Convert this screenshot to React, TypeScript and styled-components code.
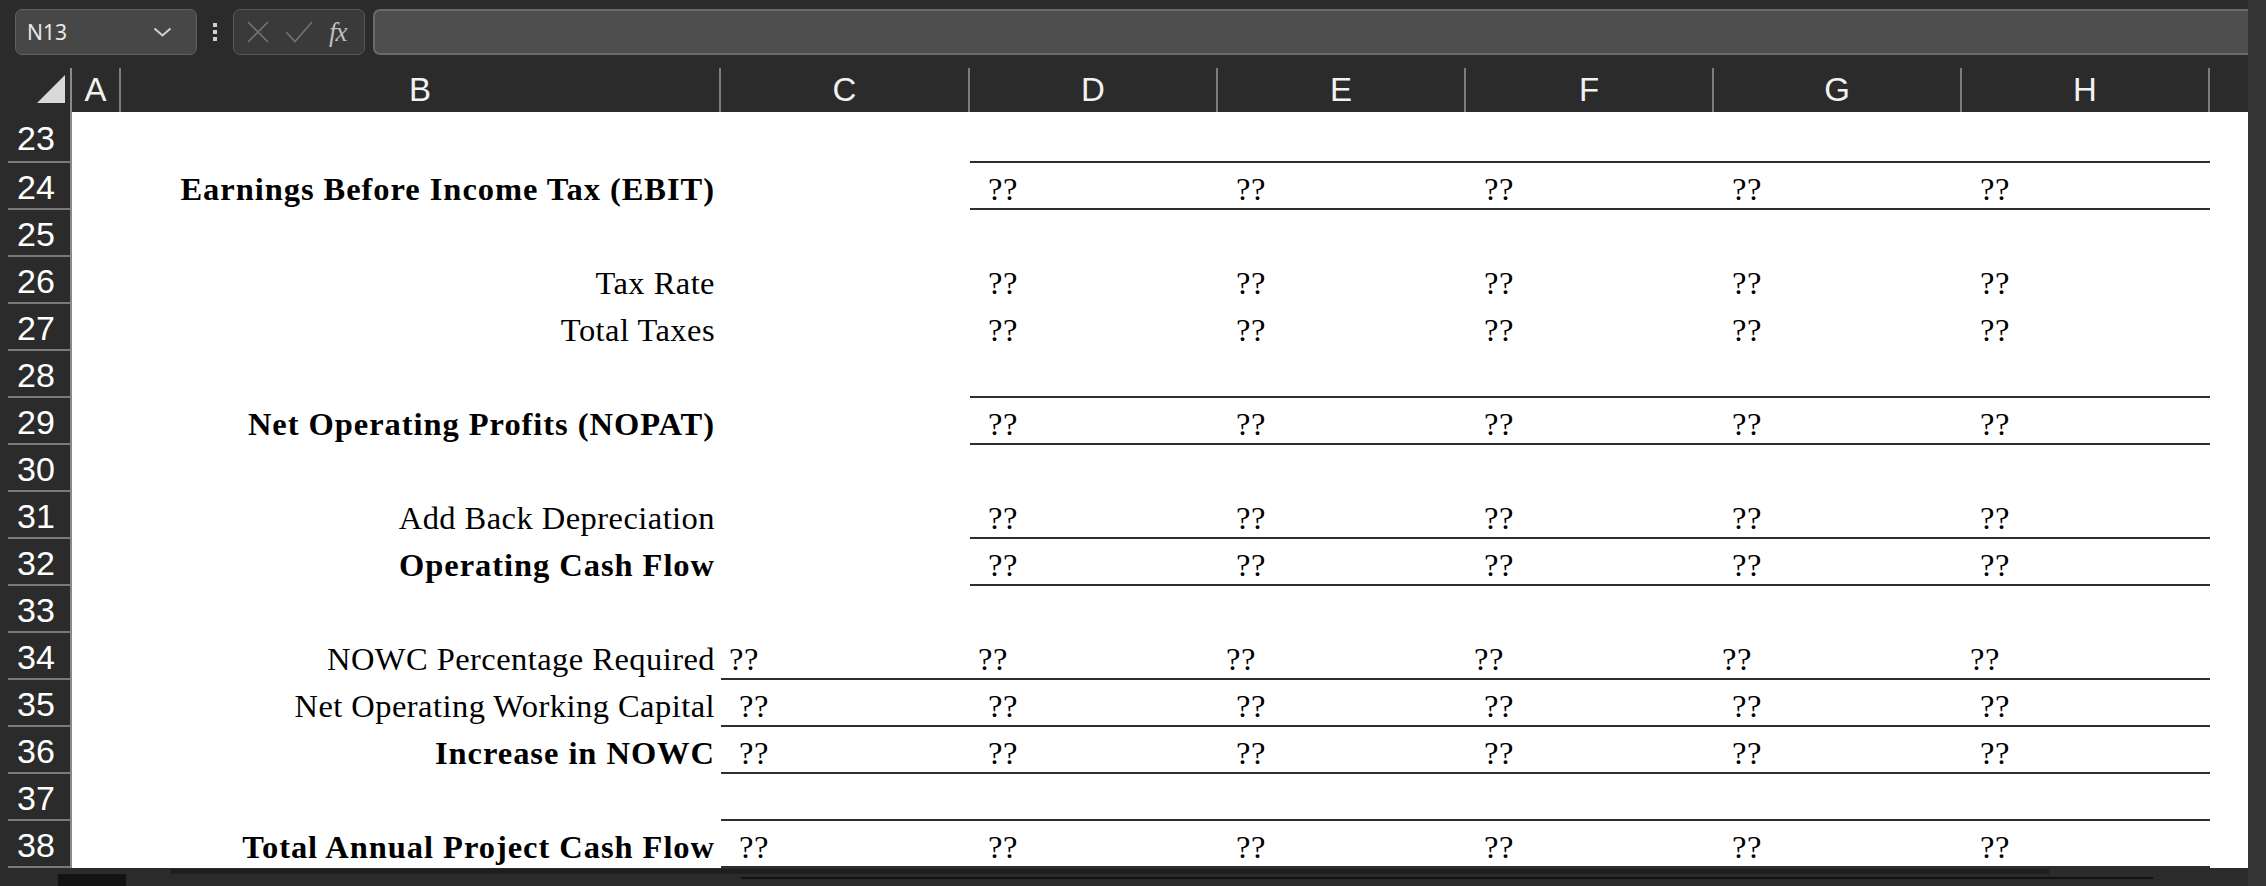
import React from "react";
import styled, { createGlobalStyle } from "styled-components";

const COLS = "72px 49px 600px 249px repeat(5, 248px) 38px";
const LETTERS = ["A", "B", "C", "D", "E", "F", "G", "H", ""];

const GlobalStyle = createGlobalStyle`
  html, body {
    margin: 0;
    padding: 0;
    background: #2b2b2b;
    overflow: hidden;
  }
  * {
    box-sizing: border-box;
  }
`;

const Frame = styled.div`
  display: flex;
  width: 2266px;
  height: 886px;
  background: #2b2b2b;
  overflow: hidden;
`;

const Main = styled.div`
  width: 2248px;
  display: flex;
  flex-direction: column;
`;

const RightRail = styled.div`
  width: 18px;
  background: #353535;
`;

const Toolbar = styled.div`
  height: 62px;
  display: flex;
  align-items: flex-start;
  padding: 9px 0 0 15px;
`;

const NameBox = styled.div`
  width: 182px;
  height: 46px;
  border: 1.5px solid #606060;
  border-radius: 7px;
  background: #474747;
  display: flex;
  align-items: center;
  justify-content: space-between;
  padding: 0 24px 0 11px;
  font-family: "Noto Sans", "Liberation Sans", sans-serif;
  font-size: 21px;
  color: #e8e8e8;
`;

const Kebab = styled.div`
  width: 36px;
  height: 46px;
  display: flex;
  flex-direction: column;
  align-items: center;
  justify-content: center;
  gap: 3.5px;
`;

const Dot = styled.span`
  width: 3.5px;
  height: 3.5px;
  background: #cfcfcf;
`;

const FuncBox = styled.div`
  width: 132px;
  height: 46px;
  border: 1.5px solid #585858;
  border-radius: 7px;
  background: #3a3a3a;
  display: flex;
  align-items: center;
  padding-left: 13px;
  gap: 16px;
`;

const Fx = styled.span`
  font-family: "Liberation Serif", serif;
  font-style: italic;
  font-size: 27px;
  color: #bdbdbd;
  letter-spacing: -1px;
`;

const FormulaBar = styled.div`
  flex: 1;
  height: 46px;
  margin-left: 8px;
  background: #4e4e4e;
  border: 2px solid #6a6a6a;
  border-right: none;
  border-radius: 7px 0 0 7px;
`;

const HeaderRow = styled.div`
  display: grid;
  grid-template-columns: ${COLS};
  height: 50px;
  align-items: end;
`;

const Corner = styled.div`
  height: 44px;
  display: flex;
  justify-content: flex-end;
  align-items: flex-end;
  padding: 0 5px 9px 0;
  border-right: 2px solid #8a8a8a;
`;

const ColHead = styled.div<{ $last?: boolean }>`
  height: 44px;
  border-right: ${(p) => (p.$last ? "none" : "2px solid #7d7d7d")};
  display: flex;
  align-items: center;
  justify-content: center;
  font-family: "Liberation Sans", Arial, sans-serif;
  font-size: 33px;
  color: #f2f2f2;
`;

const GridRow = styled.div<{ $h: number }>`
  display: grid;
  grid-template-columns: ${COLS};
  height: ${(p) => p.$h}px;
`;

const RowNum = styled.div`
  background: #2b2b2b;
  border-right: 2px solid #8a8a8a;
  padding-left: 8px;
  display: flex;
`;

const RowNumInner = styled.div`
  flex: 1;
  border-bottom: 2px solid #7a7a7a;
  display: flex;
  align-items: center;
  justify-content: center;
  padding: 4px 6px 0 0;
  font-family: "Liberation Sans", Arial, sans-serif;
  font-size: 34px;
  color: #ffffff;
`;

const Cell = styled.div<{ $line?: boolean }>`
  background: #ffffff;
  border-bottom: 2px solid ${(p) => (p.$line ? "#2e2e2e" : "transparent")};
  display: flex;
  align-items: flex-end;
  padding-bottom: 2px;
  font-family: "Liberation Serif", "Times New Roman", serif;
  font-size: 32.5px;
  line-height: 33px;
  color: #000;
  white-space: nowrap;
`;

const LabelCell = styled(Cell)<{ $bold?: boolean }>`
  justify-content: flex-end;
  padding-right: 6px;
  font-weight: ${(p) => (p.$bold ? 700 : 400)};
  letter-spacing: ${(p) => (p.$bold ? "0.95px" : "0.45px")};
`;

const ValueCell = styled(Cell)<{ $pad: number }>`
  padding-left: ${(p) => p.$pad}px;
  letter-spacing: 0.6px;
`;

const BottomBar = styled.div`
  height: 18px;
  display: flex;
  align-items: flex-start;
`;

const SheetTab = styled.div`
  width: 68px;
  height: 12px;
  margin: 6px 45px 0 58px;
  background: #131313;
`;

const ScrollArea = styled.div`
  flex: 1;
  display: flex;
  flex-direction: column;
  padding-top: 1px;
`;

const ScrollBand = styled.div`
  width: 1878px;
  height: 5px;
  background: #1e1e1e;
`;

const ScrollThumb = styled.div`
  width: 1412px;
  height: 2px;
  margin: 3px 0 0 570px;
  background: #111111;
`;

type Row = {
  n: number;
  label?: string;
  bold?: boolean;
  from?: number; // first column index holding a value (3 = C, 4 = D)
  line?: number; // first column index with a bottom border
  pad?: number;
};

const ROWS: Row[] = [
  { n: 23, line: 4 },
  { n: 24, label: "Earnings Before Income Tax (EBIT)", bold: true, from: 4, line: 4 },
  { n: 25 },
  { n: 26, label: "Tax Rate", from: 4 },
  { n: 27, label: "Total Taxes", from: 4 },
  { n: 28, line: 4 },
  { n: 29, label: "Net Operating Profits (NOPAT)", bold: true, from: 4, line: 4 },
  { n: 30 },
  { n: 31, label: "Add Back Depreciation", from: 4, line: 4 },
  { n: 32, label: "Operating Cash Flow", bold: true, from: 4, line: 4 },
  { n: 33 },
  { n: 34, label: "NOWC Percentage Required", from: 3, line: 3, pad: 8 },
  { n: 35, label: "Net Operating Working Capital", from: 3, line: 3 },
  { n: 36, label: "Increase in NOWC", bold: true, from: 3, line: 3 },
  { n: 37, line: 3 },
  { n: 38, label: "Total Annual Project Cash Flow", bold: true, from: 3, line: 3 },
];

const ChevronIcon = () => (
  <svg width="19" height="10" viewBox="0 0 19 10">
    <polyline points="1.5,1.5 9.5,8.5 17.5,1.5" fill="none" stroke="#d2d2d2" strokeWidth="2" />
  </svg>
);

const CancelIcon = () => (
  <svg width="22" height="22" viewBox="0 0 22 22">
    <path d="M1 1 L21 21 M21 1 L1 21" stroke="#727272" strokeWidth="1.6" fill="none" />
  </svg>
);

const EnterIcon = () => (
  <svg width="28" height="22" viewBox="0 0 28 22">
    <polyline points="1,11 10,20.5 27,1" fill="none" stroke="#727272" strokeWidth="1.6" />
  </svg>
);

const CornerTriangle = () => (
  <svg width="28" height="28" viewBox="0 0 28 28">
    <polygon points="28,0 28,28 0,28" fill="#d9d9d9" />
  </svg>
);

const SheetRow: React.FC<{ row: Row; first: boolean }> = ({ row, first }) => {
  const cols = [1, 2, 3, 4, 5, 6, 7, 8, 9];
  return (
    <GridRow $h={first ? 51 : 47}>
      <RowNum>
        <RowNumInner>{row.n}</RowNumInner>
      </RowNum>
      {cols.map((c) => {
        const line = row.line !== undefined && c >= row.line && c <= 8;
        if (c === 2) {
          return (
            <LabelCell key={c} $line={line} $bold={row.bold}>
              {row.label}
            </LabelCell>
          );
        }
        const hasValue = row.from !== undefined && c >= row.from && c <= 8;
        return (
          <ValueCell key={c} $line={line} $pad={row.pad ?? 18}>
            {hasValue ? "??" : ""}
          </ValueCell>
        );
      })}
    </GridRow>
  );
};

export default function App() {
  return (
    <>
      <GlobalStyle />
      <Frame>
        <Main>
          <Toolbar>
            <NameBox>
              <span>N13</span>
              <ChevronIcon />
            </NameBox>
            <Kebab>
              <Dot />
              <Dot />
              <Dot />
            </Kebab>
            <FuncBox>
              <CancelIcon />
              <EnterIcon />
              <Fx>fx</Fx>
            </FuncBox>
            <FormulaBar />
          </Toolbar>

          <HeaderRow>
            <Corner>
              <CornerTriangle />
            </Corner>
            {LETTERS.map((l, i) => (
              <ColHead key={i} $last={i === LETTERS.length - 1}>
                {l}
              </ColHead>
            ))}
          </HeaderRow>

          {ROWS.map((r, i) => (
            <SheetRow key={r.n} row={r} first={i === 0} />
          ))}

          <BottomBar>
            <SheetTab />
            <ScrollArea>
              <ScrollBand />
              <ScrollThumb />
            </ScrollArea>
          </BottomBar>
        </Main>
        <RightRail />
      </Frame>
    </>
  );
}
